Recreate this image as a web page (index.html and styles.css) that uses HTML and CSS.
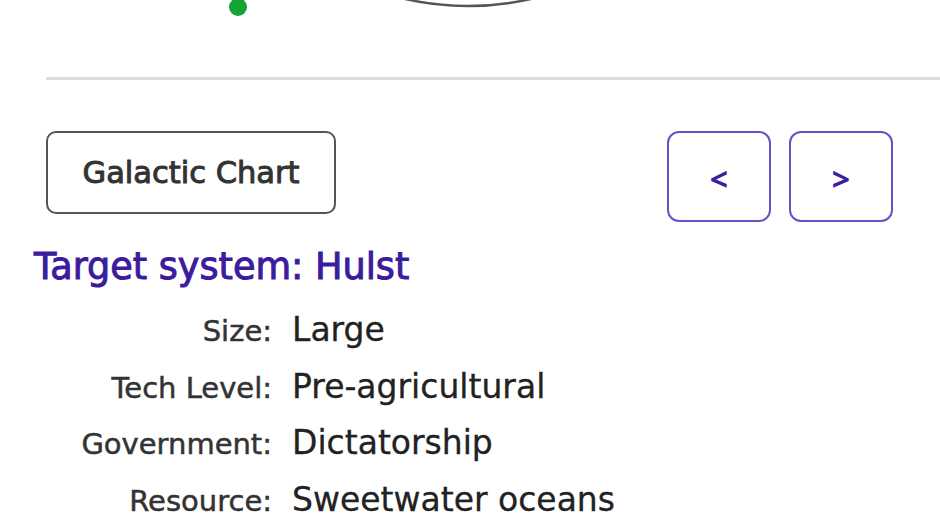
FILE: index.html
```html
<!DOCTYPE html>
<html lang="en">
<head>
<meta charset="utf-8">
<title>Target system</title>
<link rel="stylesheet" href="styles.css">
</head>
<body>
<div class="chart">
  <svg width="940" height="77" viewBox="0 0 940 77" aria-hidden="true">
    <circle cx="468" cy="-277" r="283" fill="none" stroke="#555" stroke-width="2.5"/>
    <circle cx="238" cy="7" r="9" fill="#16a336"/>
  </svg>
</div>
<div class="sep"></div>
<div class="toolbar">
  <button class="btn-chart">Galactic Chart</button>
  <div class="nav">
    <button class="btn-nav">&lt;</button>
    <button class="btn-nav">&gt;</button>
  </div>
</div>
<h1 class="title">Target system: Hulst</h1>
<div class="info">
  <div class="label">Size:</div><div class="value">Large</div>
  <div class="label">Tech Level:</div><div class="value">Pre-agricultural</div>
  <div class="label">Government:</div><div class="value">Dictatorship</div>
  <div class="label">Resource:</div><div class="value">Sweetwater oceans</div>
</div>
</body>
</html>
```
FILE: styles.css
```css
html, body {
  margin: 0;
  padding: 0;
  background: #fff;
  font-family: "DejaVu Sans", "Open Sans", sans-serif;
  overflow: hidden;
}
.chart {
  height: 77px;
}
.chart svg {
  display: block;
}
.sep {
  height: 3px;
  margin-left: 46px;
  background: #dcdcdc;
}
.toolbar {
  display: flex;
  justify-content: space-between;
  align-items: flex-start;
  margin-top: 51px;
  padding: 0 47px 0 46px;
}
.btn-chart {
  width: 290px;
  height: 83px;
  border: 2px solid #555;
  border-radius: 10px;
  background: #fff;
  color: #333;
  font-family: inherit;
  font-size: 30.5px;
  font-weight: 400;
  -webkit-text-stroke: 1px #333;
  padding: 0;
}
.nav {
  display: flex;
  gap: 18px;
}
.btn-nav {
  width: 104px;
  height: 91px;
  border: 2px solid #6552c8;
  border-radius: 12px;
  background: #fff;
  color: #3a1fa0;
  font-family: "Open Sans", sans-serif;
  font-size: 32px;
  font-weight: 700;
  padding: 4px 0 0;
}
.title {
  margin: 22px 0 0 34px;
  font-size: 36.6px;
  line-height: 46px;
  font-weight: 400;
  -webkit-text-stroke: 1px #3b1b9e;
  color: #3b1b9e;
}
.info {
  display: grid;
  grid-template-columns: 272px 1fr;
  column-gap: 20px;
  align-items: baseline;
  margin-top: 12px;
}
.label, .value {
  white-space: nowrap;
}
.label {
  text-align: right;
  font-size: 29px;
  line-height: 54px;
  -webkit-text-stroke: 0.5px #333;
  color: #333;
}
.value {
  font-size: 33px;
  line-height: 56.5px;
  -webkit-text-stroke: 0.3px #222;
  color: #222;
}
```
